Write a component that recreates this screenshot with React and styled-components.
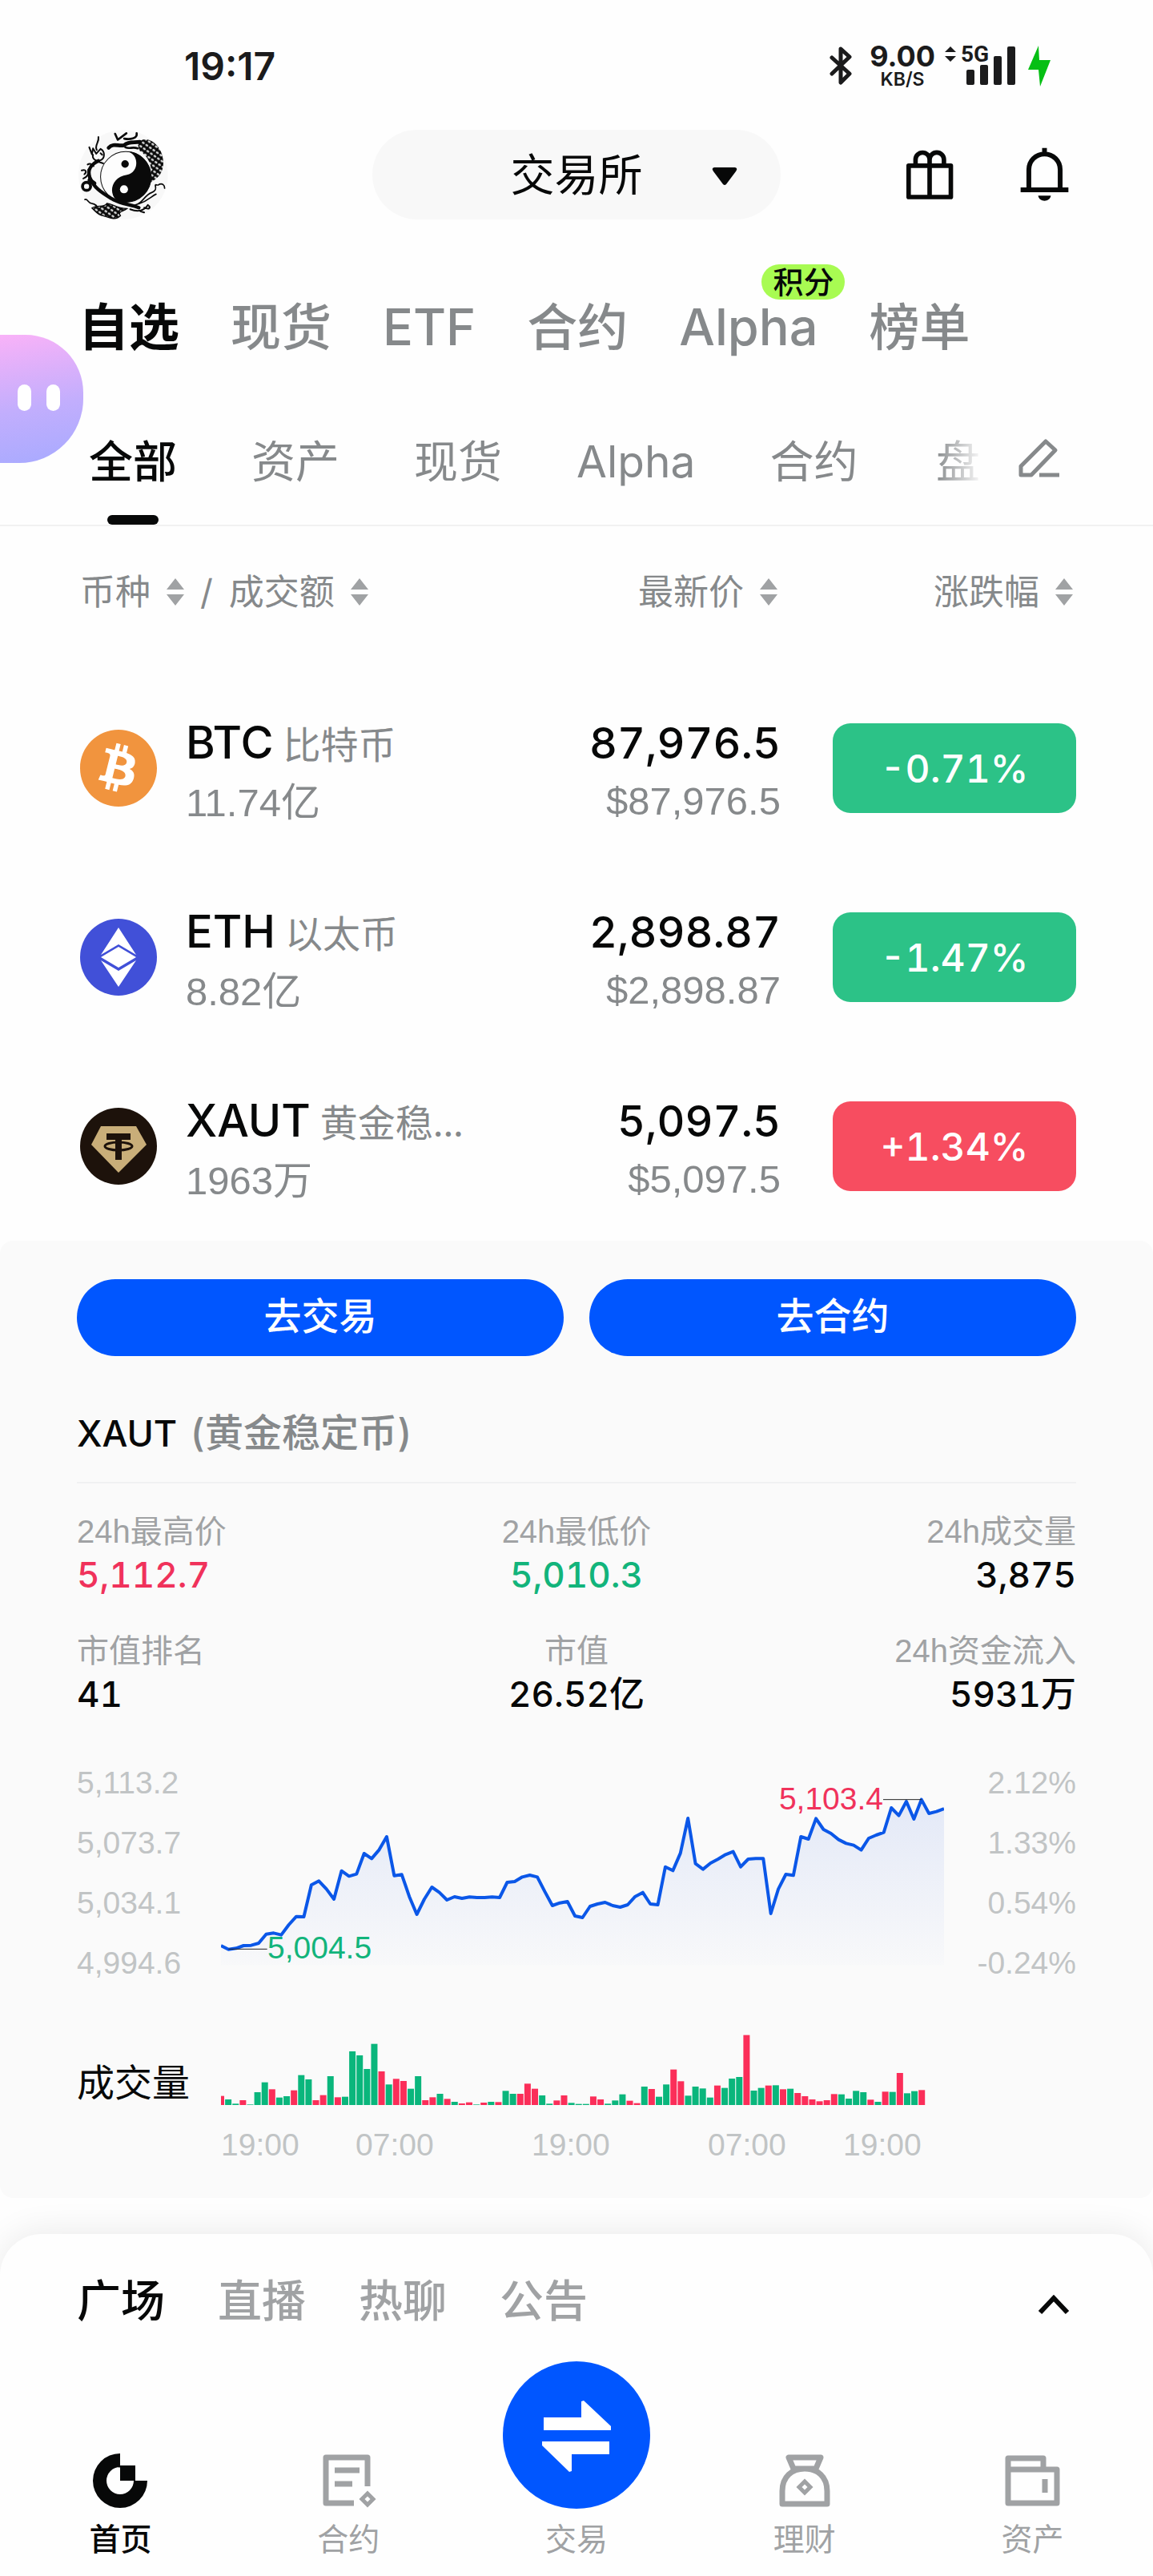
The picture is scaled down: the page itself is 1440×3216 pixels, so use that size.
import React from "react";
import styled, { createGlobalStyle } from "styled-components";
import { FaBitcoin } from "react-icons/fa6";

const color = {
  ink: "#070808",
  muted: "#86898b",
  soft: "#a0a2a4",
  faint: "#c1c4c5",
  up: "#f0325b",
  down: "#12b47b",
  blue: "#0056ff",
  page: "#fefefe",
  panel: "#fafafa",
};

const lightFont = '"Liberation Sans", "Noto Sans CJK SC", sans-serif';

const GlobalStyle = createGlobalStyle`
  * { box-sizing: border-box; }
  body {
    margin: 0;
    background: ${color.page};
    color: ${color.ink};
    font-family: Inter, "Noto Sans CJK SC", sans-serif;
    font-variant-numeric: tabular-nums;
  }
  button, select { font: inherit; color: inherit; background: none; border: 0; padding: 0; margin: 0; cursor: pointer; }
  a { color: inherit; text-decoration: none; }
  svg { display: block; flex: none; }
`;

const Page = styled.div`
  position: relative;
  overflow: hidden;
`;

/* Status bar */
const StatusBar = styled.div`
  display: flex;
  justify-content: space-between;
  align-items: center;
  height: 160px;
  padding: 4px 128px 0 230px;
  color: #1b1b1c;
`;
const Clock = styled.time`
  font-size: 48px;
  font-weight: 600;
  font-variant-numeric: normal;
`;
const StatusIcons = styled.div`
  display: flex;
  align-items: center;
  font-variant-numeric: normal;
`;
const NetSpeed = styled.div`
  display: flex;
  flex-direction: column;
  align-items: center;
  margin: 0 12px 0 22px;
  font-size: 36px;
  line-height: 34px;
  font-weight: 700;
  small { font-size: 23px; line-height: 24px; font-weight: 600; }
`;
const Signal = styled.div`
  position: relative;
  margin: 0 16px 0 6px;
  span {
    position: absolute;
    left: 0;
    top: 0;
    font: 700 28px/22px Roboto, sans-serif;
  }
`;

/* Header */
const Header = styled.header`
  display: grid;
  grid-template-columns: 1fr 510px 1fr;
  align-items: center;
  height: 112px;
  padding: 0 96px;
`;
const MarketPicker = styled.div`
  position: relative;
  select {
    appearance: none;
    width: 100%;
    height: 112px;
    border-radius: 56px;
    background: #f8f8f8;
    font-size: 55px;
    text-align: center;
    text-align-last: center;
  }
  svg { position: absolute; right: 54px; top: 46px; pointer-events: none; }
`;
const HeaderActions = styled.div`
  display: flex;
  justify-content: flex-end;
  align-items: center;
  gap: 83px;
  padding-right: 9px;
`;

/* Tabs */
const MainTabs = styled.nav`
  display: flex;
  gap: 64px;
  margin-top: 100px;
  padding: 0 98px;
`;
const MainTab = styled.button`
  position: relative;
  font-size: 63px;
  line-height: 72px;
  font-weight: ${(p) => (p.$active ? 700 : 500)};
  color: ${(p) => (p.$active ? color.ink : color.muted)};
  white-space: nowrap;
`;
const PointsBadge = styled.span`
  position: absolute;
  right: -34px;
  top: -42px;
  padding: 0 14px;
  border-radius: 22px;
  background: #a8fb52;
  color: ${color.ink};
  font-size: 38px;
  line-height: 44px;
`;
const SubTabBar = styled.div`
  display: flex;
  align-items: flex-start;
  gap: 42px;
  padding: 96px 116px 0 111px;
  border-bottom: 2px solid #f1f1f1;
`;
const SubTabs = styled.nav`
  display: flex;
  gap: 93px;
  flex: 1;
  min-width: 0;
  overflow: hidden;
  mask-image: linear-gradient(to left, transparent 0, #000 60px);
`;
const SubTab = styled.button`
  display: flex;
  flex-direction: column;
  align-items: center;
  gap: 31px;
  font-size: 55px;
  line-height: 72px;
  font-weight: ${(p) => (p.$active ? 500 : 400)};
  color: ${(p) => (p.$active ? color.ink : color.muted)};
  white-space: nowrap;
  &::after {
    content: "";
    width: 64px;
    height: 12px;
    border-radius: 6px;
    background: ${(p) => (p.$active ? color.ink : "transparent")};
  }
`;
const EditButton = styled.button`
  margin-top: 6px;
`;

/* Market table */
const Market = styled.section`
  padding: 0 96px;
`;
const CoinTable = styled.table`
  width: 100%;
  border-collapse: collapse;
  table-layout: fixed;
`;
const HeadCell = styled.th`
  width: ${(p) => p.$width || "auto"};
  height: 184px;
  padding: 0 4px 20px;
  font-size: 44px;
  font-weight: 400;
  color: ${color.muted};
`;
const HeadGroup = styled.div`
  display: flex;
  align-items: center;
  justify-content: ${(p) => (p.$end ? "flex-end" : "flex-start")};
  gap: 20px;
`;
const SortButton = styled.button`
  display: flex;
  align-items: center;
  gap: 20px;
  line-height: 56px;
  white-space: nowrap;
`;
const CoinCell = styled.td`
  height: 236px;
  padding: 0;
  text-align: right;
`;
const CoinInfo = styled.div`
  display: flex;
  align-items: center;
  gap: 36px;
  padding-left: 4px;
  text-align: left;
`;
const CoinBadge = styled.span`
  display: block;
  border-radius: 50%;
  background: #fff;
  color: #f1943e;
`;
const TwoLines = styled.div`
  padding-top: 10px;
`;
const Strong = styled.div`
  font-size: ${(p) => (p.$price ? "54px" : "56px")};
  line-height: 72px;
  font-weight: 500;
  white-space: nowrap;
  small { margin-left: 12px; font-size: 47px; font-weight: 400; color: ${color.muted}; }
`;
const Sub = styled.div`
  font-family: ${lightFont};
  font-size: 49px;
  line-height: 72px;
  color: ${color.muted};
`;
const Change = styled.button`
  width: 304px;
  height: 112px;
  border-radius: 22px;
  background: ${(p) => (p.$up ? "#f74d60" : "#2cc287")};
  color: #fff;
  font-size: 48px;
  font-weight: 500;
`;

/* Detail panel */
const Detail = styled.section`
  padding: 48px 96px 42px;
  border-radius: 16px;
  background: ${color.panel};
`;
const Actions = styled.div`
  display: grid;
  grid-template-columns: 1fr 1fr;
  gap: 32px;
`;
const ActionButton = styled.button`
  height: 96px;
  border-radius: 48px;
  background: ${color.blue};
  color: #fff;
  font-size: 47px;
  line-height: 56px;
  padding-bottom: 4px;
  font-weight: 500;
`;
const DetailTitle = styled.h2`
  margin: 66px 0 34px;
  padding-bottom: 30px;
  border-bottom: 2px solid #f0f1f2;
  font-size: 45px;
  line-height: 60px;
  font-weight: 500;
  span { margin-left: 16px; font-size: 48px; color: ${color.muted}; }
`;
const Stats = styled.dl`
  display: grid;
  grid-template-columns: 1fr 1fr 1fr;
  row-gap: 41px;
  margin: 0;
`;
const Stat = styled.div`
  text-align: ${(p) => p.$align};
  dt { font-family: ${lightFont}; font-size: 40px; line-height: 52px; color: ${color.soft}; }
  dd { margin: 0; font-size: 44px; line-height: 56px; font-weight: 500; color: ${(p) => p.$color || color.ink}; }
`;
const ChartGrid = styled.div`
  display: grid;
  grid-template-columns: 180px 1fr 165px;
  margin-top: 58px;
`;
const Scale = styled.div`
  display: flex;
  flex-direction: column;
  justify-content: space-between;
  text-align: ${(p) => p.$align};
  font-family: ${lightFont};
  font-size: 39px;
  line-height: 50px;
  color: ${color.faint};
`;
const Plot = styled.div`
  position: relative;
  height: 275px;
`;
const PeakLabel = styled.span`
  position: absolute;
  top: 21px;
  right: 76px;
  font-family: ${lightFont};
  font-size: 39px;
  line-height: 48px;
  color: ${color.up};
`;
const LowLabel = styled.span`
  position: absolute;
  top: 207px;
  left: 58px;
  font-family: ${lightFont};
  font-size: 39px;
  line-height: 48px;
  color: ${color.down};
`;
const VolumeLabel = styled.div`
  align-self: end;
  margin-top: 64px;
  font-size: 47px;
  line-height: 56px;
`;
const VolumePlot = styled.div`
  margin-top: 64px;
  height: 88px;
`;
const TimeAxis = styled.div`
  grid-column: 2;
  display: grid;
  grid-template-columns: 168fr 220fr 220fr 169fr 126fr;
  margin-top: 26px;
  font-family: ${lightFont};
  font-size: 39px;
  line-height: 48px;
  color: ${color.faint};
`;

/* Bottom sheet */
const Sheet = styled.footer`
  position: relative;
  margin-top: 45px;
  padding-top: 47px;
  border-radius: 52px 52px 0 0;
  background: ${color.page};
  box-shadow: 0 -4px 40px rgba(0, 0, 0, 0.08);
`;
const FeedTabs = styled.nav`
  display: flex;
  align-items: center;
  gap: 66px;
  padding: 0 104px 0 96px;
`;
const FeedTab = styled.button`
  font-size: 55px;
  line-height: 72px;
  font-weight: 500;
  color: ${(p) => (p.$active ? color.ink : color.soft)};
`;
const Expand = styled.button`
  margin-left: auto;
  padding-top: 10px;
`;
const NavBar = styled.nav`
  display: grid;
  grid-template-columns: repeat(5, 1fr);
  align-items: end;
  margin-top: 40px;
  padding: 0 8px 23px;
`;
const NavLink = styled.a`
  display: flex;
  flex-direction: column;
  align-items: center;
  gap: 14px;
  font-size: 39px;
  line-height: 48px;
  font-weight: ${(p) => (p.$active ? 500 : 400)};
  color: ${(p) => (p.$active ? color.ink : color.soft)};
`;

const Assistant = styled.button`
  position: absolute;
  left: 0;
  top: 418px;
  display: flex;
  align-items: center;
  gap: 19px;
  width: 104px;
  height: 160px;
  padding: 0 0 4px 22px;
  border-radius: 0 72px 80px 0;
  background: linear-gradient(170deg, #f9b2f8, #c2aefd 55%, #a7aaff);
  i { width: 17px; height: 33px; border-radius: 9px; background: #fff; }
`;

const Bluetooth = () => (
  <svg width="28" height="50" viewBox="0 0 28 50" fill="none" stroke="#1b1b1c" strokeWidth="5" strokeLinejoin="round" strokeLinecap="round">
    <path d="M3 15 L25 35 L14 46 V4 L25 14 L3 35" />
  </svg>
);
const DataArrows = () => (
  <svg width="14" height="50" viewBox="0 0 14 50" fill="#1b1b1c">
    <path d="M7 1 L14 8 H0Z M0 13 H14 L7 20Z" />
  </svg>
);
const SignalBars = () => (
  <svg width="68" height="50" viewBox="0 0 68 50" fill="#1b1b1c">
    <rect x="7" y="30" width="10" height="19" rx="2" />
    <rect x="24" y="24" width="10" height="25" rx="2" />
    <rect x="41" y="13" width="10" height="36" rx="2" />
    <rect x="58" y="1" width="10" height="48" rx="2" />
  </svg>
);
const Bolt = () => (
  <svg width="28" height="52" viewBox="0 0 28 52" fill="#06bf14">
    <path d="M13 1 L0 31 H13 L15 52 L28 19 H14Z" />
  </svg>
);

const DragonLogo = () => (
  <svg width="116" height="116" viewBox="20 25 345 345" role="img" aria-label="头像">
    <defs>
      <pattern id="scales" width="16" height="16" patternUnits="userSpaceOnUse" patternTransform="rotate(35)">
        <rect width="16" height="16" fill="#0a0a0a" />
        <ellipse cx="8" cy="8" rx="6" ry="4" fill="#d9dada" />
      </pattern>
    </defs>
    <circle cx="192" cy="198" r="166" fill="#f8f8f8" />
    <path d="M246 84 C262 52 312 66 332 112 C352 160 340 206 290 228 C304 190 298 136 252 108Z" fill="url(#scales)" />
    <circle cx="202" cy="206" r="94" fill="#fdfdfd" stroke="#0a0a0a" strokeWidth="3" />
    <path d="M208 112 C252 120 252 190 206 198 C150 206 136 262 166 292 C226 320 296 274 296 206 C296 150 252 112 208 112Z" fill="#0a0a0a" />
    <circle cx="199" cy="158" r="14" fill="#0a0a0a" />
    <circle cx="195" cy="252" r="15" fill="#fdfdfd" />
    <g fill="none" stroke="#0a0a0a" strokeLinecap="round" strokeLinejoin="round">
      <path d="M138 98 C156 78 176 94 196 88 C214 72 234 80 254 76" strokeWidth="14" />
      <path d="M162 46 L172 68 L204 44 M196 64 C216 68 246 64 242 44 M200 96 C216 104 226 92 246 100" strokeWidth="8" />
      <path d="M100 58 C104 78 84 88 94 106 M66 96 L76 122 L80 100 L92 120 L108 102 C126 112 124 138 108 144 M80 124 C74 140 96 150 118 156 M108 118 L114 124" strokeWidth="6" />
      <path d="M100 146 C72 160 58 178 68 208 C84 246 108 262 148 286 C178 306 216 308 250 320" strokeWidth="13" />
      <path d="M38 182 C54 176 58 188 48 196 M44 212 C60 206 64 192 62 180 M60 160 C68 154 76 158 82 166" strokeWidth="6" />
      <circle cx="56" cy="241" r="15" strokeWidth="11" />
      <path d="M68 218 L84 230" strokeWidth="16" />
      <path d="M208 310 C262 322 264 276 298 264 C328 254 300 230 318 236 M322 236 C338 226 346 238 346 248 M250 306 C286 294 296 278 314 270" strokeWidth="5" />
      <path d="M218 326 C244 336 270 334 284 310 M256 334 L270 338 M270 320 C292 330 292 318 288 314" strokeWidth="6" />
      <path d="M50 290 C60 286 60 302 74 304 C92 306 100 320 102 336" strokeWidth="5" />
    </g>
    <path d="M76 322 C98 306 118 324 132 304 C152 306 168 322 206 324 C190 336 170 334 182 350 C164 370 138 356 118 350 C98 348 92 336 76 322Z" fill="url(#scales)" stroke="#0a0a0a" strokeWidth="4" />
  </svg>
);
const Gift = () => (
  <svg width="60" height="63" viewBox="330 435 180 190" fill="none" stroke={color.ink} strokeWidth="17" strokeLinejoin="round">
    <path d="M341 495 H500 V613 H341Z M420 495 V613 M367 492 V472 A26 26 0 0 1 420 472 A26 26 0 0 1 474 472 V492 M420 468 V495" />
  </svg>
);
const Bell = () => (
  <svg width="61" height="68" viewBox="760 430 184 204" fill="none" stroke={color.ink} strokeWidth="18">
    <path d="M793 588 V513 A59 59 0 0 1 911 513 V588 M762 589 H942 M852 432 V454" />
    <path d="M828 611 H876 C872 637 832 637 828 611Z" fill={color.ink} stroke="none" />
  </svg>
);
const Pen = () => (
  <svg width="54" height="54" viewBox="0 0 54 54" fill="none" stroke={color.muted} strokeWidth="5" strokeLinejoin="round">
    <path d="M36 5 L48 16 L18 47 H5 V36Z M28 47 H53" />
  </svg>
);
const SortIcon = () => (
  <svg width="22" height="34" viewBox="0 0 22 34" fill={color.soft}>
    <path d="M11 0 L22 14 H0Z M0 20 H22 L11 34Z" />
  </svg>
);
const EthIcon = () => (
  <svg width="96" height="96" viewBox="0 0 96 96">
    <circle cx="48" cy="48" r="48" fill="#4150d8" />
    <path d="M48 11 L70 45 L48 32 L26 45Z M48 35 L70 48 L48 61 L26 48Z M48 85 L26 52 L48 65 L70 52Z" fill="#fff" />
  </svg>
);
const XautIcon = () => (
  <svg width="96" height="96" viewBox="0 0 96 96">
    <circle cx="48" cy="48" r="48" fill="#1d120b" />
    <path d="M26 23 H70 L83 46 L48 81 L14 46Z" fill="#c9ae79" />
    <path d="M33 32 H63 V40 H52 V65 H44 V40 H33Z" fill="#1d120b" />
    <ellipse cx="48" cy="48" rx="17" ry="5" fill="none" stroke="#1d120b" strokeWidth="3" />
  </svg>
);

const HomeIcon = () => (
  <svg width="72" height="72" viewBox="0 0 72 72" fill="currentColor">
    <path d="M36 3 A34 34 0 1 0 70 37 H53 A17 17 0 1 1 36 20Z M36 18 H55 V37 H36Z" />
  </svg>
);
const ContractIcon = () => (
  <svg width="72" height="72" viewBox="0 0 72 72" fill="none" stroke="currentColor" strokeWidth="7" strokeLinejoin="round">
    <path d="M60 44 V8 H8 V65 H43 M19 24 H50 M19 41 H41" />
    <path d="M60 53 L67 60 L60 67 L53 60Z" strokeWidth="5" strokeLinejoin="miter" />
  </svg>
);
const BagIcon = () => (
  <svg width="72" height="72" viewBox="0 0 72 72" fill="none" stroke="currentColor" strokeWidth="7" strokeLinejoin="round">
    <path d="M16 8 H56 L50 22 H22Z M8 66 V50 C8 32 20 22 36 22 S64 32 64 50 V66Z" />
    <path d="M36 38 L43 45 L36 52 L29 45Z" strokeWidth="5" strokeLinejoin="miter" />
  </svg>
);
const WalletIcon = () => (
  <svg width="72" height="72" viewBox="0 0 72 72" fill="none" stroke="currentColor" strokeWidth="7" strokeLinejoin="round">
    <path d="M5 65 V9 H49 V23 M5 23 H66 V65 H5Z M51 35 V52" />
  </svg>
);
const SwapIcon = () => (
  <svg width="184" height="184" viewBox="0 0 184 184">
    <circle cx="92" cy="92" r="92" fill={color.blue} />
    <path d="M51 70 H98 V50 L101 49 L135 81 V86 H51Z M49 100 H133 V116 H86 V137 L83 138 L49 105Z" fill="#fff" />
  </svg>
);

const LINE = [
  804, 818, 814, 804, 803, 795, 761, 757, 764, 726, 695, 696, 577, 562, 592, 630, 524, 544, 536, 459, 478, 445, 396, 542,
  538, 620, 687, 630, 585, 605, 633, 621, 627, 622, 624, 624, 622, 624, 567, 564, 547, 540, 547, 602, 654, 644, 639, 693,
  699, 657, 648, 642, 654, 660, 651, 620, 605, 648, 651, 509, 523, 458, 327, 497, 518, 495, 480, 463, 452, 509, 480, 478,
  478, 684, 592, 537, 541, 396, 405, 328, 369, 384, 407, 421, 428, 446, 402, 390, 380, 288, 317, 264, 330, 257, 309, 302, 291,
];
const linePoints = LINE.map((y, i) => `${((i * 2709) / 96).toFixed(1)},${y}`).join(" ");

const PriceChart = () => (
  <svg width="100%" height="100%" viewBox="0 120 2709 825" preserveAspectRatio="none" role="img" aria-label="XAUT 价格走势">
    <defs>
      <linearGradient id="area" x1="0" y1="257" x2="0" y2="877" gradientUnits="userSpaceOnUse">
        <stop offset="0" stopColor="#2a5de0" stopOpacity="0.11" />
        <stop offset="1" stopColor="#2a5de0" stopOpacity="0.01" />
      </linearGradient>
    </defs>
    <polygon points={`0,877 ${linePoints} 2709,877`} fill="url(#area)" />
    <polyline points={linePoints} fill="none" stroke="#0b57e8" strokeWidth="12" strokeLinejoin="round" />
    <path d="M28 817 H173 M2481 257 H2625" stroke="#222" strokeWidth="3" />
  </svg>
);

const VOLUME = [
  -34, 21, 5, -18, 2, 48, 85, -59, 28, 33, -55, 112, 96, -18, -37, 108, -29, 31, 201, 186, 135, 229, -126, 77, -98, -90,
  61, 108, -18, -29, 42, -23, 12, -6, -10, 2, -9, 12, -11, 53, 42, -42, -80, -61, 36, 5, -17, -36, 8, 4, 4, -32, -21, 5,
  17, 40, -16, -7, 69, -60, 31, 77, -133, -89, 35, 69, 62, 28, -73, 64, 99, 105, -262, 54, 64, -73, 74, -59, 61, -45,
  -33, -21, -14, -18, -41, 40, 24, 53, 48, -20, 12, -50, 49, -120, 44, 52, -56,
];
const VolumeChart = () => (
  <svg width="100%" height="100%" viewBox="0 0 2709 264" preserveAspectRatio="none" role="img" aria-label="成交量">
    {VOLUME.map((v, i) => (
      <rect
        key={i}
        x={-12 + i * 27.35}
        y={264 - Math.abs(v)}
        width="24"
        height={Math.abs(v)}
        fill={v < 0 ? "#fb2e59" : "#0ab67c"}
      />
    ))}
  </svg>
);

const COINS = [
  { symbol: "BTC", name: "比特币", volume: "11.74亿", price: "87,976.5", change: "-0.71%", icon: <FaBitcoin size={96} viewBox="8 8 496 496" /> },
  { symbol: "ETH", name: "以太币", volume: "8.82亿", price: "2,898.87", change: "-1.47%", icon: <EthIcon /> },
  { symbol: "XAUT", name: "黄金稳...", volume: "1963万", price: "5,097.5", change: "+1.34%", icon: <XautIcon /> },
];
const STATS = [
  ["24h最高价", "5,112.7", "left", color.up],
  ["24h最低价", "5,010.3", "center", color.down],
  ["24h成交量", "3,875", "right"],
  ["市值排名", "41", "left"],
  ["市值", "26.52亿", "center"],
  ["24h资金流入", "5931万", "right"],
];
const NAV = [
  ["首页", <HomeIcon />],
  ["合约", <ContractIcon />],
  ["交易", <SwapIcon />],
  ["理财", <BagIcon />],
  ["资产", <WalletIcon />],
];

const Sort = ({ children }) => (
  <SortButton type="button">
    {children}
    <SortIcon />
  </SortButton>
);

export default function App() {
  return (
    <Page>
      <GlobalStyle />
      <StatusBar>
        <Clock>19:17</Clock>
        <StatusIcons>
          <Bluetooth />
          <NetSpeed>
            9.00<small>KB/S</small>
          </NetSpeed>
          <DataArrows />
          <Signal>
            <SignalBars />
            <span>5G</span>
          </Signal>
          <Bolt />
        </StatusIcons>
      </StatusBar>

      <Header>
        <a href="#profile">
          <DragonLogo />
        </a>
        <MarketPicker>
          <select aria-label="市场" defaultValue="交易所">
            <option>交易所</option>
          </select>
          <svg width="32" height="24" viewBox="0 0 32 24" fill={color.ink}>
            <path d="M3 1 H29 Q33 2 30 6 L18 22 Q16 24 14 22 L2 6 Q-1 2 3 1Z" />
          </svg>
        </MarketPicker>
        <HeaderActions>
          <button type="button" aria-label="奖励"><Gift /></button>
          <button type="button" aria-label="通知"><Bell /></button>
        </HeaderActions>
      </Header>

      <MainTabs>
        {["自选", "现货", "ETF", "合约", "Alpha", "榜单"].map((t, i) => (
          <MainTab key={t} type="button" $active={i === 0}>
            {t}
            {t === "Alpha" && <PointsBadge>积分</PointsBadge>}
          </MainTab>
        ))}
      </MainTabs>

      <SubTabBar>
        <SubTabs>
          {["全部", "资产", "现货", "Alpha", "合约", "盘"].map((t, i) => (
            <SubTab key={t} type="button" $active={i === 0}>{t}</SubTab>
          ))}
        </SubTabs>
        <EditButton type="button" aria-label="编辑"><Pen /></EditButton>
      </SubTabBar>

      <Market>
        <CoinTable>
          <thead>
            <tr>
              <HeadCell>
                <HeadGroup>
                  <Sort>币种</Sort>/<Sort>成交额</Sort>
                </HeadGroup>
              </HeadCell>
              <HeadCell $width="335px">
                <HeadGroup $end><Sort>最新价</Sort></HeadGroup>
              </HeadCell>
              <HeadCell $width="369px">
                <HeadGroup $end><Sort>涨跌幅</Sort></HeadGroup>
              </HeadCell>
            </tr>
          </thead>
          <tbody>
            {COINS.map((c) => (
              <tr key={c.symbol}>
                <CoinCell>
                  <CoinInfo>
                    <CoinBadge>{c.icon}</CoinBadge>
                    <TwoLines>
                      <Strong>{c.symbol}<small>{c.name}</small></Strong>
                      <Sub>{c.volume}</Sub>
                    </TwoLines>
                  </CoinInfo>
                </CoinCell>
                <CoinCell>
                  <TwoLines>
                    <Strong $price>{c.price}</Strong>
                    <Sub>${c.price}</Sub>
                  </TwoLines>
                </CoinCell>
                <CoinCell>
                  <Change type="button" $up={c.change[0] === "+"}>{c.change}</Change>
                </CoinCell>
              </tr>
            ))}
          </tbody>
        </CoinTable>
      </Market>

      <Detail>
        <Actions>
          <ActionButton type="button">去交易</ActionButton>
          <ActionButton type="button">去合约</ActionButton>
        </Actions>
        <DetailTitle>XAUT<span>(黄金稳定币)</span></DetailTitle>
        <Stats>
          {STATS.map(([label, value, align, tone]) => (
            <Stat key={label} $align={align} $color={tone}>
              <dt>{label}</dt>
              <dd>{value}</dd>
            </Stat>
          ))}
        </Stats>
        <ChartGrid>
          <Scale $align="left">
            <span>5,113.2</span><span>5,073.7</span><span>5,034.1</span><span>4,994.6</span>
          </Scale>
          <Plot>
            <PriceChart />
            <PeakLabel>5,103.4</PeakLabel>
            <LowLabel>5,004.5</LowLabel>
          </Plot>
          <Scale $align="right">
            <span>2.12%</span><span>1.33%</span><span>0.54%</span><span>-0.24%</span>
          </Scale>
          <VolumeLabel>成交量</VolumeLabel>
          <VolumePlot><VolumeChart /></VolumePlot>
          <TimeAxis>
            <span>19:00</span><span>07:00</span><span>19:00</span><span>07:00</span><span>19:00</span>
          </TimeAxis>
        </ChartGrid>
      </Detail>

      <Sheet>
        <FeedTabs>
          {["广场", "直播", "热聊", "公告"].map((t, i) => (
            <FeedTab key={t} type="button" $active={i === 0}>{t}</FeedTab>
          ))}
          <Expand type="button" aria-label="展开">
            <svg width="40" height="26" viewBox="0 0 40 26" fill="none" stroke={color.ink} strokeWidth="6">
              <path d="M3 23 L20 5 L37 23" />
            </svg>
          </Expand>
        </FeedTabs>
        <NavBar>
          {NAV.map(([label, icon], i) => (
            <NavLink key={label} href={`#${label}`} $active={i === 0}>
              {icon}
              {label}
            </NavLink>
          ))}
        </NavBar>
      </Sheet>

      <Assistant type="button" aria-label="助手"><i /><i /></Assistant>
    </Page>
  );
}
